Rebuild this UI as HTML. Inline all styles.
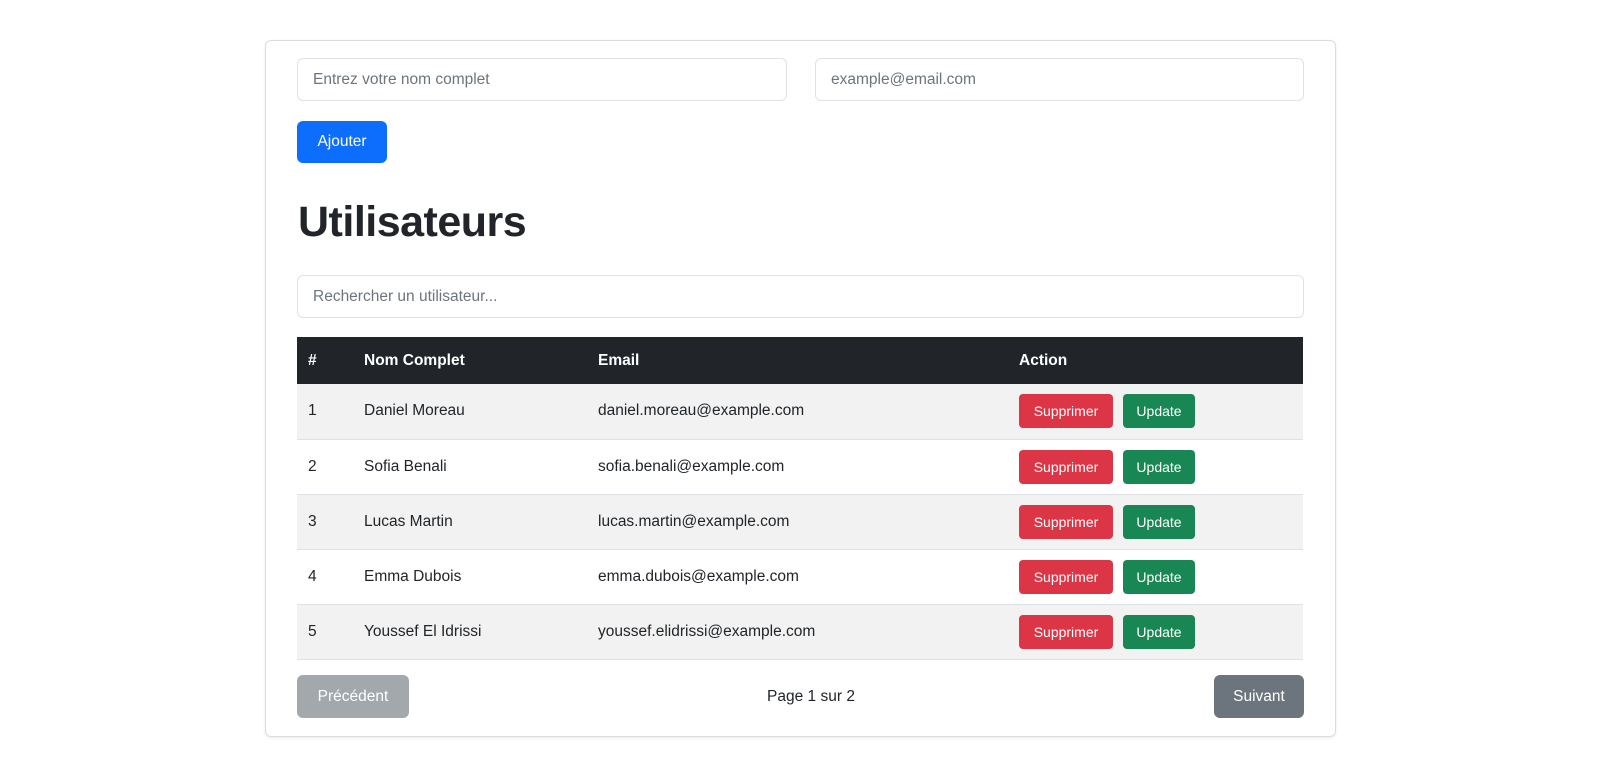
<!DOCTYPE html>
<html><head><meta charset="utf-8"><style>
*{box-sizing:border-box;margin:0;padding:0}
body{width:1600px;height:758px;background:#fff;font-family:"Liberation Sans",sans-serif;color:#212529;position:relative;overflow:hidden}
.card{position:absolute;left:265px;top:40px;width:1071px;height:697px;border:1px solid #dcdcdc;border-radius:6px;box-shadow:0 1px 3px rgba(0,0,0,.08)}
.inp{position:absolute;height:43px;border:1px solid #dee2e6;border-radius:6px;font-size:15.5px;color:#6c757d;padding:0 15px;line-height:41px}
.btn{position:absolute;border-radius:6px;color:#fff;font-size:15.5px;text-align:center}
h1{position:absolute;left:298px;top:196px;font-size:43px;font-weight:bold;letter-spacing:-0.5px;line-height:52px}
table{position:absolute;left:297px;top:337px;width:1006px;border-collapse:collapse;font-size:15.5px}
th{background:#212529;color:#fff;text-align:left;height:47px;font-weight:bold;padding-left:11px}
td{height:55px;padding-left:11px;border-bottom:1px solid #dee2e6}
tr.s td{background:#f2f2f2}
.sb{display:inline-block;height:34px;line-height:34px;border-radius:4px;color:#fff;font-size:14px;text-align:center;margin-right:10px;vertical-align:middle}
.r{background:#dc3545;width:94px}.g{background:#198754;width:72px}
</style></head><body>
<div class="card"></div>
<div class="inp" style="left:297px;top:58px;width:490px">Entrez votre nom complet</div>
<div class="inp" style="left:815px;top:58px;width:489px">example@email.com</div>
<div class="btn" style="left:297px;top:121px;width:90px;height:42px;line-height:42px;background:#0d6efd">Ajouter</div>
<h1>Utilisateurs</h1>
<div class="inp" style="left:297px;top:275px;width:1007px">Rechercher un utilisateur...</div>
<table>
<tr><th style="width:56px">#</th><th style="width:234px">Nom Complet</th><th style="width:421px">Email</th><th>Action</th></tr>
<tr class="s"><td>1</td><td>Daniel Moreau</td><td>daniel.moreau@example.com</td><td><span class="sb r">Supprimer</span><span class="sb g">Update</span></td></tr>
<tr><td>2</td><td>Sofia Benali</td><td>sofia.benali@example.com</td><td><span class="sb r">Supprimer</span><span class="sb g">Update</span></td></tr>
<tr class="s"><td>3</td><td>Lucas Martin</td><td>lucas.martin@example.com</td><td><span class="sb r">Supprimer</span><span class="sb g">Update</span></td></tr>
<tr><td>4</td><td>Emma Dubois</td><td>emma.dubois@example.com</td><td><span class="sb r">Supprimer</span><span class="sb g">Update</span></td></tr>
<tr class="s"><td>5</td><td>Youssef El Idrissi</td><td>youssef.elidrissi@example.com</td><td><span class="sb r">Supprimer</span><span class="sb g">Update</span></td></tr>
</table>
<div class="btn" style="left:297px;top:675px;width:112px;height:43px;line-height:43px;background:#a3a8ad">Précédent</div>
<div style="position:absolute;left:700px;width:222px;text-align:center;top:688px;font-size:15.5px">Page 1 sur 2</div>
<div class="btn" style="left:1214px;top:675px;width:90px;height:43px;line-height:43px;background:#6c757d">Suivant</div>
</body></html>
